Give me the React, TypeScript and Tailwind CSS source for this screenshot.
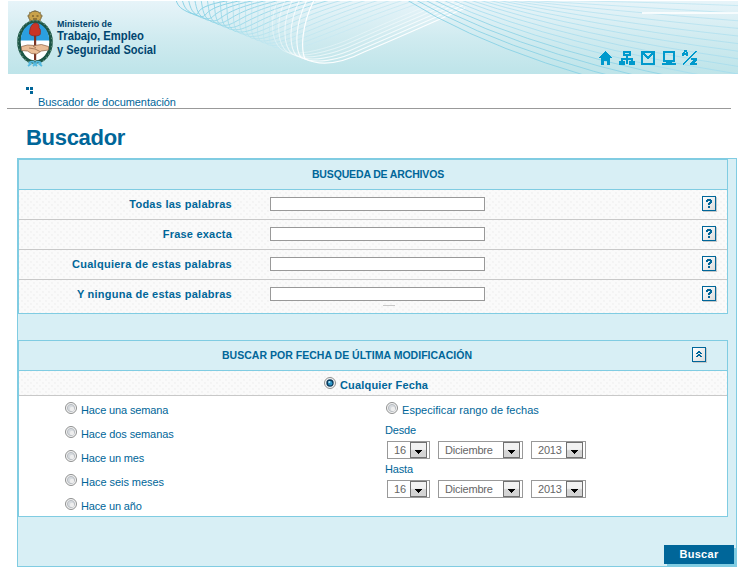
import type { ReactNode } from 'react';

const mix = (t: number) => {
  const c = (a: number, b: number) => Math.round(a + (b - a) * t);
  return `rgb(${c(125, 255)},${c(205, 255)},${c(226, 255)})`;
};

function Waves() {
  const left = Array.from({ length: 17 }, (_, i) => i / 22);
  const white = Array.from({ length: 6 }, (_, i) => i / 5);
  const right = Array.from({ length: 15 }, (_, i) => i);
  return (
    <svg className="absolute inset-0" width="730" height="73" viewBox="8 1 730 73" fill="none">
      {left.map((t) => {
        const sx = 176 + 138 * t;
        const px = 190 + 123 * t;
        const py = 13 + 50 * t;
        const ex = 232 + 270 * t;
        return (
          <path
            key={t}
            d={`M${sx} 0C${sx + 2} ${py * 0.5} ${px - 9} ${py - 4} ${px} ${py}C${px + 18} ${py + 5} ${ex - 50 - 50 * t} ${py * 0.6} ${ex} 0`}
            stroke={mix(Math.min(1, t * 0.75))}
            strokeOpacity={t > 0.4 ? 0.65 : 0.9}
          />
        );
      })}
      {white.map((t) => (
        <path
          key={t}
          d={`M${278 + 36 * t} 0C${269 + 32 * t} ${20 + 6 * t} ${271 + 30 * t} ${44 + 6 * t} ${284 + 21 * t} ${51 + 8 * t}C${294 + 26 * t} ${57 + 9 * t} ${325 + 15 * t} ${50 + 14 * t} ${352 + 12 * t} ${38 + 14 * t}Q${392 + 8 * t} ${20 + 17 * t} ${455 + 10 * t} ${-6 + 14 * t}`}
          stroke="#fff"
          strokeOpacity={0.35 + 0.6 * t}
          strokeWidth={1 + 0.2 * t}
        />
      ))}
      {right.map((k) => (
        <path
          key={k}
          d={`M${407 + 9 * k} 0Q${519 + 8 * k} ${70 - 4.9 * k} 738 ${112 - 7.6 * k}`}
          stroke={k < 4 ? '#8dd3e6' : '#a4dcee'}
          strokeOpacity={0.95 - k * 0.035}
        />
      ))}
      <path d="M642 13H738" stroke="#fff" strokeWidth="2" strokeOpacity=".8" />
    </svg>
  );
}

function Crest() {
  return (
    <svg className="shrink-0" width="38" height="58" viewBox="0 0 38 58">
      <g stroke="#a3915a" strokeWidth="1">
        <path d="M19 1v11M13 3l12 9M25 3L13 12M11 7h16" />
      </g>
      <ellipse cx="19" cy="7.5" rx="6.4" ry="5.4" fill="#c9a24a" stroke="#6f6240" strokeWidth="1" />
      <path d="M16 7h2M20.500 7h2M17 10h4" stroke="#5a4520" />
      <ellipse cx="19" cy="33" rx="16" ry="20" fill="none" stroke="#1d5646" strokeWidth="3.600" />
      <ellipse cx="19" cy="33" rx="17" ry="21.500" fill="none" stroke="#5b8a78" strokeWidth="1.500" strokeDasharray="1.500 2.500" />
      <ellipse cx="19" cy="33" rx="14.200" ry="18.500" fill="#fff" />
      <path d="M4.800 31.500a14.200 17.500 0 0 1 28.400 0z" fill="#2b9fe0" />
      <path d="M18 26h2.200v25H18z" fill="#7a3526" />
      <path d="M13.500 25c0-6 2-10 5.500-11 4 0 4.500 3 4 5 2 1 1.500 4 1.200 6.500-2 2-8.500 2-10.700-.5z" fill="#c93526" stroke="#8d251d" strokeWidth=".7" />
      <path d="M5.500 37.500l6-1.500 7 .5 7-1 7 2v3.500l-7 1-5 3-5-.5-4-2.500-6-.5z" fill="#e9bd97" stroke="#8b6044" strokeWidth=".7" />
      <path d="M13 39l6 1 5 2.500M17 37l3 2" stroke="#8b6044" strokeWidth=".7" fill="none" />
      <path d="M18.500 53c-4-1-7 1-4 2l-2.500 2M19.500 53c4-1 7 1 4 2l2.500 2M17 53l4 4M21 53l-4 4" fill="none" stroke="#55b9e0" strokeWidth="1.800" />
    </svg>
  );
}

function Glyph({ w, children }: { w: number; children: ReactNode }) {
  return (
    <svg width={w} height="15" viewBox={`0 0 ${w} 15`} fill="#0099cc" shapeRendering="crispEdges">
      {children}
    </svg>
  );
}

function HeaderIcons() {
  return (
    <div className="relative mt-[49px] mr-[41px] ml-auto flex h-[15px]">
      <Glyph w={13}>
        <path d="M6 1h1v1h1v1h1v1h1v1h1v1h1v1h1v1H0V7h1V6h1V5h1V4h1V3h1V2h1z" />
        <path d="M2 8h9v7H8v-4H5v4H2z" />
      </Glyph>
      <div className="w-[7px]" />
      <Glyph w={16}>
        <path fillRule="evenodd" d="M4 1h8v5H9v2h5v3h2v4h-6v-4h2v-1H9v3h0v1H7v-4H4v1h2v4H0v-4h2V8h5V6H4zM6 3v1h4V3zM2 13h2v0h-2zM12 13h2v0h-2z" />
      </Glyph>
      <div className="w-[6px]" />
      <Glyph w={14}>
        <path fillRule="evenodd" d="M0 1h14v14H0zM2 5v8h10V5h-1v1h-1v1H9v1H8v1H6V8H5V7H4V6H3V5zM4 3v1h1v1h1v1h2V5h1V4h1V3z" />
      </Glyph>
      <div className="w-[7px]" />
      <Glyph w={14}>
        <path fillRule="evenodd" d="M1 1h12v11h-3v1h4v2H0v-2h4v-1H1zM3 3v7h8V3z" />
      </Glyph>
      <div className="w-[6px]" />
      <Glyph w={15}>
        <path fillRule="evenodd" d="M2 0h3v2h1v4H4V5H2v1H0V3h1V2h1zM3 2v1h1V2z" />
        <path d="M14 1h1v1h-1v1h-1v1h-1v1h-1v1h-1v1H9v1H8v1H7v1H6v1H5v1H4v1H3v1H2v1H1v-1h1v-1h1v-1h1v-1h1V9h1V8h1V7h1V6h1V5h1V4h1V3h1V2h1z" />
        <path d="M13 1h1v1h-1v1h-1v1h-1v1h-1v1H9v1H8v1H7v1H6v1H5v1H4v1H3v1H2v1H1v-1h1v-1h1v-1h1v-1h1V9h1V8h1V7h1V6h1V5h1V4h1V3h1V2h1z" />
        <path d="M9 8h6v3h-1v1h-1v1h2v2H8v-2h1v-1h1v-1h1v-1H9z" />
      </Glyph>
    </div>
  );
}

function Radio({ checked = false }: { checked?: boolean }) {
  return (
    <svg className="shrink-0" width="12" height="12" viewBox="0 0 12 12">
      <circle cx="6" cy="6" r="5.500" fill="#f4f4f4" stroke="#8e8f8f" />
      {checked ? (
        <>
          <circle cx="6" cy="6" r="3.700" fill="#0b3a5c" />
          <circle cx="6.200" cy="6.200" r="2.200" fill="#2b93c4" />
          <circle cx="5.300" cy="5" r="1.100" fill="#b9e8f8" />
        </>
      ) : (
        <>
          <circle cx="6" cy="6" r="3.600" fill="#d6dade" stroke="#b9bdc2" />
          <circle cx="7" cy="7" r="2.200" fill="#eeeeee" />
        </>
      )}
    </svg>
  );
}

function IconBox({ children }: { children: ReactNode }) {
  return (
    <button className="block h-[15px] w-[14px] border border-[#006699] bg-linear-to-br from-white to-[#dcdcdc] shadow-[1px_1px_0_#c4c8ca]">
      <svg width="12" height="13" viewBox="0 0 12 13" fill="#006699" shapeRendering="crispEdges">
        {children}
      </svg>
    </button>
  );
}

const dots =
  'bg-[#fafafa] bg-[radial-gradient(#f3f3f3_0.7px,transparent_0.8px),radial-gradient(#f3f3f3_0.7px,transparent_0.8px)] bg-[size:6px_6px] bg-[position:0_0,3px_3px]';

function SearchRow({ label, spacing, last = false }: { label: string; spacing: string; last?: boolean }) {
  return (
    <div className={`flex items-start ${last ? 'h-[33px]' : 'h-[30px] border-b border-[#c8c8c8]'} ${dots}`}>
      <div className={`w-[213px] pt-[7px] text-right text-[11px] leading-[14px] font-bold ${spacing}`}>{label}</div>
      <div className="ml-[38px] flex w-[215px] flex-col items-center pt-[7px]">
        <input className="block h-[14px] w-full border border-[#999] bg-white outline-none" />
        {last && <div className="mt-[4px] ml-[23px] h-px w-[12px] bg-[#c8c8c8]" />}
      </div>
      <div className="mt-[6px] mr-[11px] ml-auto">
        <IconBox>
          <path d="M4 2h4v1h1v3H8v1H7v1H5V6h1V5h1V4H5v1H3V3h1zM5 9h2v2H5z" />
        </IconBox>
      </div>
    </div>
  );
}

function Select({ value, width }: { value: string; width: string }) {
  return (
    <div className={`flex h-[18px] items-center border border-[#999] bg-white pr-[2px] pl-[6px] text-[11px] text-[#666] ${width}`}>
      <span className="tracking-[-0.2px]">{value}</span>
      <span className="ml-auto flex h-[16px] w-[17px] items-center justify-center border border-[#707070] bg-linear-to-b from-[#f2f2f2] from-45% to-[#d4d4d4] to-55%">
        <svg className="mt-[4px]" width="7" height="4" viewBox="0 0 7 4" shapeRendering="crispEdges">
          <path d="M0 0h7v1H6v1H5v1H4v1H3V3H2V2H1V1H0z" />
        </svg>
      </span>
    </div>
  );
}

function DateSelects() {
  return (
    <div className="ml-[2px] flex gap-[8px]">
      <Select value="16" width="w-[43px]" />
      <Select value="Diciembre" width="w-[85px]" />
      <Select value="2013" width="w-[55px]" />
    </div>
  );
}

function Option({ label, spacing }: { label: string; spacing: string }) {
  return (
    <label className="flex h-[24px] items-start">
      <Radio />
      <span className={`mt-[2px] ml-[4px] text-[11px] leading-[13px] ${spacing}`}>{label}</span>
    </label>
  );
}

export default function App() {
  return (
    <div className="h-[583px] w-[753px] overflow-hidden bg-white pt-px font-['Liberation_Sans',Arial,sans-serif] text-[#006699]">
      <header className="relative ml-[8px] flex h-[73px] w-[730px] items-start overflow-hidden bg-linear-to-b from-[#e7f4f9] via-[#d0ebf0] to-[#bee4e9]">
        <Waves />
        <div className="relative mt-[8px] ml-[8px] flex">
          <Crest />
          <svg className="ml-[3px] overflow-visible" width="104" height="56" viewBox="0 0 104 56" fill="#00456f" fontWeight="bold">
            <text x="0" y="17.500" fontSize="9.500" textLength="55" lengthAdjust="spacingAndGlyphs">Ministerio de</text>
            <text x="0" y="30.500" fontSize="12.500" textLength="87" lengthAdjust="spacingAndGlyphs">Trabajo, Empleo</text>
            <text x="0" y="44.500" fontSize="12.500" textLength="99" lengthAdjust="spacingAndGlyphs">y Seguridad Social</text>
          </svg>
        </div>
        <HeaderIcons />
      </header>

      <nav className="ml-[7px] h-[35px] w-[724px] border-b border-[#999] pt-[13px]">
        <svg className="ml-[19px] block" width="7" height="7" viewBox="0 0 7 7" fill="#006699" shapeRendering="crispEdges">
          <path d="M0 0h3v3H0zM4 0h3v3H4zM4 4h3v3H4z" />
        </svg>
        <div className="mt-[2px] ml-[31px] text-[11px] leading-[13px] tracking-[-0.06px]">Buscador de documentación</div>
      </nav>

      <h1 className="mt-[15px] ml-[26px] h-[34px] text-[22px] leading-[28px] font-bold tracking-[-0.3px]">Buscador</h1>

      <main className="ml-[17px] h-[409px] w-[720px] border border-[#80cce2] bg-[#d8eff5]">
        <section className="h-[155px] w-[710px] border border-[#80cce2]">
          <h2 className="h-[30px] border-b border-[#80cce2] pl-[10px] text-center text-[10.5px] leading-[29px] font-bold tracking-[-0.15px]">
            BUSQUEDA DE ARCHIVOS
          </h2>
          <SearchRow label="Todas las palabras" spacing="tracking-[0.25px]" />
          <SearchRow label="Frase exacta" spacing="tracking-[0.22px]" />
          <SearchRow label="Cualquiera de estas palabras" spacing="tracking-[0.28px]" />
          <SearchRow label="Y ninguna de estas palabras" spacing="tracking-[0.25px]" last />
        </section>

        <section className="mt-[26px] h-[177px] w-[710px] border border-[#80cce2]">
          <div className="flex h-[30px] items-start border-b border-[#80cce2]">
            <h2 className="ml-[203px] text-[10.5px] leading-[29px] font-bold whitespace-nowrap tracking-[0.02px]">
              BUSCAR POR FECHA DE ÚLTIMA MODIFICACIÓN
            </h2>
            <div className="mt-[6px] mr-[21px] ml-auto">
              <IconBox>
                <path d="M5 3h2v1h1v1h1v1H7V5H5v1H3V5h1V4h1zM5 6h2v1h1v1h1v1H7V8H5v1H3V8h1V7h1z" />
              </IconBox>
            </div>
          </div>
          <label className={`flex h-[25px] items-start border-b border-[#c8c8c8] pt-[6px] pl-[305px] ${dots}`}>
            <Radio checked />
            <span className="mt-[2px] ml-[4px] text-[11px] leading-[13px] font-bold tracking-[0.17px]">Cualquier Fecha</span>
          </label>
          <div className="flex h-[120px] bg-white">
            <div className="w-[320px] pt-[6px] pl-[46px]">
              <Option label="Hace una semana" spacing="tracking-[-0.14px]" />
              <Option label="Hace dos semanas" spacing="tracking-[-0.1px]" />
              <Option label="Hace un mes" spacing="tracking-[-0.15px]" />
              <Option label="Hace seis meses" spacing="tracking-[-0.05px]" />
              <Option label="Hace un año" spacing="tracking-[-0.15px]" />
            </div>
            <div className="pt-[6px] pl-[46px] text-[11px]">
              <div className="ml-px">
                <Option label="Especificar rango de fechas" spacing="tracking-[0.04px]" />
              </div>
              <div className="-mt-[2px] h-[17px] leading-[13px] tracking-[-0.15px]">Desde</div>
              <DateSelects />
              <div className="h-[21px] pt-[4px] leading-[13px] tracking-[-0.15px]">Hasta</div>
              <DateSelects />
            </div>
          </div>
        </section>
        <div className="mt-[28px] flex justify-end pr-[2px]">
          <button className="h-[19px] w-[70px] bg-[#006699] pb-px text-[11px] leading-[17px] font-bold tracking-[0.3px] text-white shadow-[3px_3px_0_#80cce2]">
            Buscar
          </button>
        </div>
      </main>
    </div>
  );
}
